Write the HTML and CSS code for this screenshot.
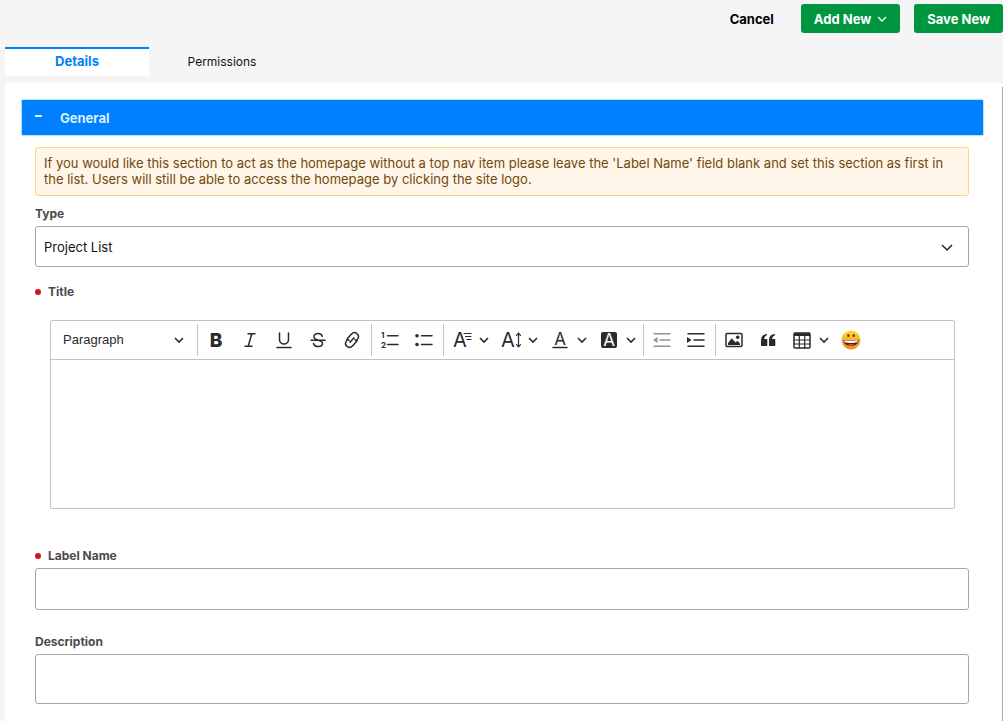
FILE: index.html
```html
<!DOCTYPE html>
<html lang="en">
<head>
  <meta charset="UTF-8" />
  <meta name="viewport" content="width=device-width, initial-scale=1.0"/>
  <title>Add Section</title>
  <link rel="stylesheet" href="styles.css">
</head>
<body>

  <header class="actions">
    <button type="button" class="btn btn-plain">Cancel</button>
    <button type="button" class="btn btn-green">Add New
      <svg width="10" height="6" viewBox="0 0 10 6"><path d="M1 1l4 4 4-4"/></svg>
    </button>
    <button type="button" class="btn btn-green">Save New</button>
  </header>

  <nav class="tabs">
    <a href="#details" class="tab active">Details</a>
    <a href="#permissions" class="tab">Permissions</a>
  </nav>

  <main class="panel" id="details">
    <form class="form">
      <button type="button" class="section-header" aria-expanded="true">
        <span class="minus"></span>
        <span>General</span>
      </button>

      <div class="section-body">
        <p class="notice">If you would like this section to act as the homepage without a top nav item please leave the 'Label Name' field blank and set this section as first in the list. Users will still be able to access the homepage by clicking the site logo.</p>

        <label class="label" for="type">Type</label>
        <select id="type" class="field select">
          <option selected>Project List</option>
        </select>

        <label class="label required title-label" for="title">Title</label>
        <div class="editor">
          <div class="toolbar">
            <button type="button" class="heading">Paragraph
              <svg class="caret" viewBox="0 0 10 10"><path d="M1 3l4 4 4-4"/></svg>
            </button>

            <span class="separator"></span>
            <button type="button" class="tool" aria-label="Bold">
              <svg class="icon" viewBox="0 0 20 20"><text class="glyph bold" x="10" y="17">B</text></svg>
            </button>
            <button type="button" class="tool" aria-label="Italic">
              <svg class="icon" viewBox="0 0 20 20"><path class="line" d="M8 3.700h7M5 16.300h7M11.700 4L8.300 16"/></svg>
            </button>
            <button type="button" class="tool" aria-label="Underline">
              <svg class="icon" viewBox="0 0 20 20"><path class="line" d="M5.500 3v6.500a4.500 4.500 0 0 0 9 0V3M3 17.500h14"/></svg>
            </button>
            <button type="button" class="tool" aria-label="Strikethrough">
              <svg class="icon" viewBox="0 0 20 20"><path class="line" d="M14.200 6.200C13.700 4.500 12.200 3.600 10 3.600c-2.400 0-4.100 1.200-4.100 3.100 0 1.600 1.100 2.400 4.100 3.300 3.300 1 4.500 1.800 4.500 3.500 0 1.900-1.800 3-4.300 3-2.600 0-4.300-1-4.700-3M3 10.300h14"/></svg>
            </button>
            <button type="button" class="tool" aria-label="Link">
              <svg class="icon" viewBox="0 0 20 20">
                <path class="line" d="M7 10.500L5 8.900M5 8.900l4.500-5a4 4 0 0 1 6.200 5l-1.700 2.300M13 9.500l2 1.600M15 11.100l-4.500 5a4 4 0 0 1-6.200-5L5 10M8 12.300l4-4.600"/>
              </svg>
            </button>

            <span class="separator"></span>
            <button type="button" class="tool" aria-label="Numbered list">
              <svg class="icon" viewBox="0 0 20 20">
                <path class="line" d="M7.500 5.700H18M7.500 14.500H18"/>
                <text class="digit" x="1" y="8">1</text>
                <text class="digit" x="1" y="18">2</text>
              </svg>
            </button>
            <button type="button" class="tool" aria-label="Bulleted list">
              <svg class="icon" viewBox="0 0 20 20">
                <path class="line" d="M7.500 5.700H18M7.500 14.500H18"/>
                <circle cx="3" cy="5.700" r="1.800"/><circle cx="3" cy="14.500" r="1.800"/>
              </svg>
            </button>

            <span class="separator"></span>
            <button type="button" class="tool dropdown" aria-label="Font family">
              <svg class="icon" viewBox="0 0 20 20"><text class="glyph" x="8" y="17">A</text><path class="thin" d="M12 3.500h7M13.500 6.500H19M15 9.500h4"/></svg>
              <svg class="caret" viewBox="0 0 10 10"><path d="M1 3l4 4 4-4"/></svg>
            </button>
            <button type="button" class="tool dropdown" aria-label="Font size">
              <svg class="icon" viewBox="0 0 20 20"><text class="glyph" x="7" y="17">A</text><path class="thin" d="M17.500 4v12M15.500 5.300l2-2.100 2 2.100M15.500 14.700l2 2.100 2-2.100"/></svg>
              <svg class="caret" viewBox="0 0 10 10"><path d="M1 3l4 4 4-4"/></svg>
            </button>
            <button type="button" class="tool dropdown" aria-label="Font color">
              <svg class="icon" viewBox="0 0 20 20"><text class="glyph small" x="10" y="15">A</text><path class="line" d="M3 17.500h14"/></svg>
              <svg class="caret" viewBox="0 0 10 10"><path d="M1 3l4 4 4-4"/></svg>
            </button>
            <button type="button" class="tool dropdown" aria-label="Font background color">
              <svg class="icon" viewBox="0 0 20 20"><rect x="2" y="2" width="16" height="16" rx="2"/><text class="glyph small light" x="10" y="16">A</text></svg>
              <svg class="caret" viewBox="0 0 10 10"><path d="M1 3l4 4 4-4"/></svg>
            </button>

            <span class="separator"></span>
            <button type="button" class="tool" aria-label="Decrease indent" disabled>
              <svg class="icon" viewBox="0 0 20 20"><path class="line" d="M2 3.700h16M8 10h10M2 16.300h16"/><path d="M1 10l4.500-3v6z"/></svg>
            </button>
            <button type="button" class="tool" aria-label="Increase indent">
              <svg class="icon" viewBox="0 0 20 20"><path class="line" d="M2 3.700h16M8 10h10M2 16.300h16"/><path d="M5.500 10L1 7v6z"/></svg>
            </button>

            <span class="separator"></span>
            <button type="button" class="tool" aria-label="Insert image">
              <svg class="icon" viewBox="0 0 20 20">
                <rect class="line" x="2" y="3.500" width="16" height="13" rx="1"/>
                <path d="M4 15v-2l3.800-4.800 3.700 4.300 1.800-1.700L16 13.500V15z"/>
                <circle cx="13.700" cy="7.300" r="1.800"/>
              </svg>
            </button>
            <button type="button" class="tool" aria-label="Block quote">
              <svg class="icon" viewBox="0 0 20 20">
                <path d="M3 10.500C3 6.500 5 4.200 9 4v1.300C7.200 5.900 6.200 7.200 6.200 9H8.500a.8.8 0 0 1 .8.8v5.400a.8.8 0 0 1-.8.8H3.800a.8.8 0 0 1-.8-.8zM11 10.500c0-4 2-6.300 6-6.500v1.300c-1.800.6-2.800 1.900-2.800 3.700h2.300a.8.8 0 0 1 .8.8v5.400a.8.8 0 0 1-.8.8h-4.700a.8.8 0 0 1-.8-.8z"/>
              </svg>
            </button>
            <button type="button" class="tool dropdown" aria-label="Insert table">
              <svg class="icon" viewBox="0 0 20 20">
                <rect class="line" x="2" y="3" width="16" height="15" rx="1"/>
                <path d="M2 3h16v3H2z"/>
                <path class="thin" d="M2 10h16M2 14h16M7.300 6v12M12.700 6v12"/>
              </svg>
              <svg class="caret" viewBox="0 0 10 10"><path d="M1 3l4 4 4-4"/></svg>
            </button>
            <button type="button" class="tool" aria-label="Emoji">
              <svg class="icon" viewBox="0 0 20 20">
                <defs>
                  <linearGradient id="face" x1="0" y1="0" x2="0" y2="1">
                    <stop offset="0" stop-color="#ffd83a"/>
                    <stop offset="1" stop-color="#f58a1f"/>
                  </linearGradient>
                </defs>
                <circle cx="10" cy="10" r="9.500" fill="url(#face)"/>
                <ellipse cx="7.300" cy="5.500" rx="1" ry="1.600" fill="#4a2c14"/>
                <ellipse cx="12.700" cy="5.500" rx="1" ry="1.600" fill="#4a2c14"/>
                <path d="M2.500 9.800q7.500 2 15 0c0 4-3 6.200-7.500 6.200s-7.500-2.200-7.500-6.200z" fill="#56200f"/>
                <path d="M3.200 10.200q6.800 1.600 13.600 0l-.4 2q-6.400 1.600-12.800 0z" fill="#fff"/>
                <path d="M6.500 14.800q3.500-1.600 7 0-3.500 1.800-7 0z" fill="#ef4545"/>
              </svg>
            </button>
          </div>
          <textarea id="title" class="editable"></textarea>
        </div>

        <label class="label required" for="label-name">Label Name</label>
        <input id="label-name" class="field name-field" type="text">

        <label class="label" for="description">Description</label>
        <textarea id="description" class="field description"></textarea>
      </div>
    </form>
  </main>

</body>
</html>
```
FILE: styles.css
```css
* {
  box-sizing: border-box;
}

body {
  margin: 0;
  min-height: 100vh;
  display: flex;
  flex-direction: column;
  background: #f5f5f5;
  font-family: Inter, "Liberation Sans", sans-serif;
  font-size: 13px;
  line-height: 16px;
  color: #111;
}

button,
input,
select,
textarea {
  font: inherit;
  color: inherit;
}

button {
  border: none;
  background: none;
  padding: 0;
  cursor: pointer;
}

.actions {
  display: flex;
  justify-content: flex-end;
  gap: 14px;
  padding-top: 4px;
}

.btn {
  display: flex;
  align-items: center;
  gap: 6px;
  height: 29px;
  padding: 0 13px;
  border-radius: 3px;
  font-weight: 700;
}

.btn-plain {
  color: #000;
}

.btn-green {
  background: #00963f;
  color: #fff;
}

.btn svg {
  flex: none;
  fill: none;
  stroke: #fff;
  stroke-width: 1.3;
}

.tabs {
  display: flex;
  gap: 1px;
  margin: 14px 0 7px 5px;
}

.tab {
  width: 144px;
  height: 29px;
  padding-top: 5px;
  border-top: 2px solid transparent;
  color: #111;
  font-size: 12px;
  text-align: center;
  text-decoration: none;
}

.tab.active {
  padding-top: 4px;
  border-color: #0080ff;
  background: #fff;
  color: #0080ff;
  font-size: 13px;
  font-weight: 700;
}

.panel {
  flex: 1;
  display: flex;
  margin-left: 5px;
  padding-top: 4px;
  background: #fff;
}

.form {
  flex: 1;
  padding: 12px 18px 17px 16px;
  border-right: 1px solid #a8a8a8;
}

.section-header {
  display: flex;
  align-items: center;
  gap: 18px;
  width: 100%;
  height: 37px;
  padding: 0 13px;
  border: 1px solid #b9e2ff;
  border-radius: 2px;
  background: #0080ff;
  color: #d9f0ff;
  font-weight: 700;
}

.minus {
  width: 7px;
  height: 2px;
  margin-bottom: 4px;
  background: #d9f0ff;
}

.section-body {
  display: flex;
  flex-direction: column;
  padding: 11px 15px 0 14px;
}

.notice {
  margin: 0 0 10px;
  padding: 7px 8px 8px;
  border: 1px solid #ffd37a;
  border-radius: 3px;
  background: #fff5e8;
  color: #6f4a0c;
}

.label {
  margin-bottom: 4px;
  color: #4a4a4a;
  font-size: 12px;
  font-weight: 700;
}

.required {
  display: flex;
  align-items: center;
  gap: 7px;
}

.required::before {
  content: "";
  width: 6px;
  height: 6px;
  border-radius: 50%;
  background: #d9101e;
}

.field {
  width: 100%;
  padding: 0 8px;
  border: 1px solid #a6a6a6;
  border-radius: 3px;
  background: #fff;
}

.select {
  height: 41px;
  margin-bottom: 17px;
  appearance: none;
  background: #fff url("data:image/svg+xml,%3Csvg xmlns='http://www.w3.org/2000/svg' width='12' height='12' fill='none' stroke='%23222' stroke-width='1.5'%3E%3Cpath d='M1 4l5 5 5-5'/%3E%3C/svg%3E") no-repeat right 15px center;
}

.title-label {
  margin-bottom: 20px;
}

.editor {
  margin: 0 14px 39px 15px;
  border: 1px solid #c4c4c4;
  border-radius: 2px;
}

.toolbar {
  display: flex;
  align-items: center;
  height: 39px;
  border-bottom: 1px solid #c4c4c4;
  color: #2b2b2b;
}

.heading {
  display: flex;
  align-items: center;
  justify-content: space-between;
  width: 144px;
  padding: 0 11px 0 12px;
  font-family: "Liberation Sans", Arial, sans-serif;
}

.separator {
  width: 1px;
  height: 32px;
  margin: 0 1px 0 2px;
  background: #c4c4c4;
}

.tool {
  display: flex;
  align-items: center;
  width: 34px;
  height: 34px;
  padding-left: 7px;
}

.tool:disabled {
  opacity: 0.5;
}

.dropdown {
  width: 49px;
  gap: 7px;
}

.icon {
  width: 20px;
  height: 20px;
  flex: none;
  fill: currentColor;
  overflow: visible;
}

.line,
.thin {
  fill: none;
  stroke: currentColor;
  stroke-width: 1.5;
  stroke-linecap: round;
}

.thin {
  stroke-width: 1.2;
}

.glyph {
  font-size: 20px;
  text-anchor: middle;
}

.glyph.bold {
  font-size: 19px;
  font-weight: 800;
}

.glyph.small {
  font-size: 17px;
}

.glyph.light {
  fill: #fff;
}

.digit {
  font-size: 8px;
  font-weight: 700;
}

.caret {
  width: 10px;
  height: 10px;
  flex: none;
  fill: none;
  stroke: currentColor;
  stroke-width: 1.6;
}

.editable {
  display: block;
  width: 100%;
  height: 148px;
  padding: 8px;
  border: none;
  background: none;
  resize: none;
}

.name-field {
  height: 42px;
  margin-bottom: 24px;
}

.description {
  height: 50px;
  padding: 8px;
  resize: none;
}
```
